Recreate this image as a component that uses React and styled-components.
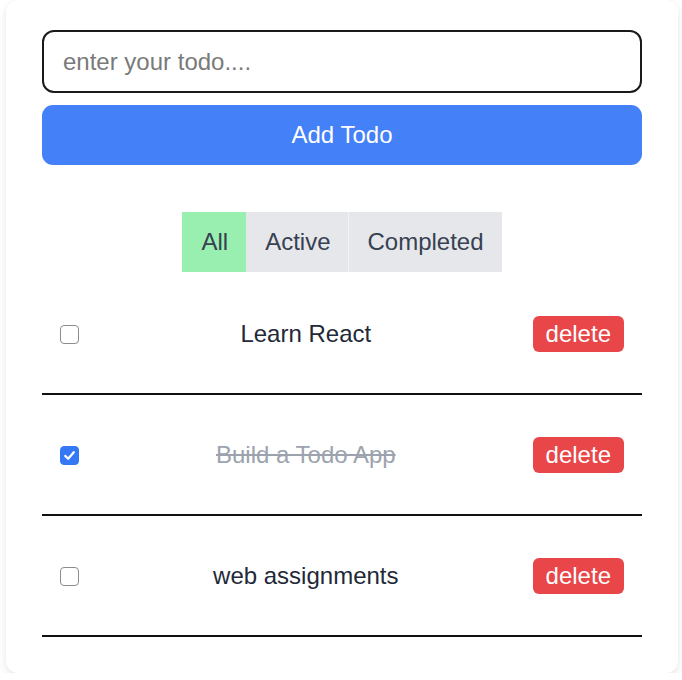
import React, { useState } from "react";
import styled, { createGlobalStyle, css } from "styled-components";

const Global = createGlobalStyle`
  html, body { margin: 0; padding: 0; background: #ffffff; }
  body { font-family: "Liberation Sans", Arial, sans-serif; }
  * { box-sizing: border-box; }
`;

const Card = styled.div`
  margin: 0 4px 0 6px;
  padding: 30px 36px 36px;
  background: #ffffff;
  border-radius: 12px;
  box-shadow: 0 4px 10px rgba(0, 0, 0, 0.09), 0 0 3px rgba(0, 0, 0, 0.04);
`;

const Form = styled.form`
  display: flex;
  flex-direction: column;
  gap: 12px;
`;

const TextInput = styled.input`
  width: 100%;
  height: 63px;
  padding: 0 19px;
  font-family: inherit;
  font-size: 24px;
  color: #111827;
  border: 2px solid #1a1a1a;
  border-radius: 12px;
  outline: none;
  background: #fff;
  &::placeholder { color: #7a7a7a; }
`;

const AddButton = styled.button`
  width: 100%;
  height: 60px;
  border: none;
  border-radius: 11px;
  background: #4480f8;
  color: #ffffff;
  font-family: inherit;
  font-size: 24px;
  cursor: pointer;
`;

const Filters = styled.div`
  display: flex;
  justify-content: center;
  margin-top: 47px;
`;

const FilterButton = styled.button`
  height: 60px;
  padding: 0 18px;
  border: none;
  border-left: 1px solid ${(p) => (p.$first ? "transparent" : "rgba(255,255,255,0.55)")};
  background: ${(p) => (p.$active ? "#98efb0" : "#e5e7eb")};
  color: #374151;
  font-family: inherit;
  font-size: 24px;
  cursor: pointer;
`;

const List = styled.ul`
  list-style: none;
  margin: 2px 0 0;
  padding: 0;
`;

const Row = styled.li`
  display: flex;
  align-items: center;
  justify-content: space-between;
  padding: 42px 18px 41px;
  border-bottom: 2px solid #111111;
`;

const CheckWrap = styled.label`
  position: relative;
  display: inline-flex;
  width: 19px;
  height: 19px;
`;

const CheckInput = styled.input`
  appearance: none;
  margin: 0;
  width: 19px;
  height: 19px;
  border-radius: 4px;
  border: 1.5px solid #8c8c8c;
  background: #fff;
  cursor: pointer;
  &:checked {
    background: #3478f6;
    border-color: #3478f6;
  }
`;

const CheckMark = styled.svg`
  position: absolute;
  left: 3px;
  top: 3px;
  width: 13px;
  height: 13px;
  pointer-events: none;
`;

const ItemText = styled.span`
  font-size: 24px;
  line-height: 36px;
  color: #1f2937;
  ${(p) =>
    p.$done &&
    css`
      color: #9ca3af;
      text-decoration: line-through;
    `}
`;

const DeleteButton = styled.button`
  height: 36px;
  padding: 0 13px;
  border: none;
  border-radius: 6px;
  background: #e84649;
  color: #ffffff;
  font-family: inherit;
  font-size: 24px;
  line-height: 36px;
  cursor: pointer;
`;

const initial = [
  { id: 1, text: "Learn React", done: false },
  { id: 2, text: "Build a Todo App", done: true },
  { id: 3, text: "web assignments", done: false },
];

export default function App() {
  const [todos, setTodos] = useState(initial);
  const [filter, setFilter] = useState("All");
  const [value, setValue] = useState("");

  const visible = todos.filter((t) =>
    filter === "All" ? true : filter === "Active" ? !t.done : t.done
  );

  return (
    <>
      <Global />
      <Card>
        <Form
          onSubmit={(e) => {
            e.preventDefault();
            if (!value.trim()) return;
            setTodos([...todos, { id: Date.now(), text: value, done: false }]);
            setValue("");
          }}
        >
          <TextInput
            placeholder="enter your todo...."
            value={value}
            onChange={(e) => setValue(e.target.value)}
          />
          <AddButton type="submit">Add Todo</AddButton>
        </Form>
        <Filters>
          {["All", "Active", "Completed"].map((f, i) => (
            <FilterButton
              key={f}
              $first={i < 2}
              $active={filter === f}
              onClick={() => setFilter(f)}
            >
              {f}
            </FilterButton>
          ))}
        </Filters>
        <List>
          {visible.map((t) => (
            <Row key={t.id}>
              <CheckWrap>
                <CheckInput
                  type="checkbox"
                  checked={t.done}
                  onChange={() =>
                    setTodos(todos.map((x) => (x.id === t.id ? { ...x, done: !x.done } : x)))
                  }
                />
                {t.done && (
                  <CheckMark viewBox="0 0 13 13">
                    <path
                      d="M2.2 6.9 L5.2 9.8 L10.8 3.2"
                      fill="none"
                      stroke="#ffffff"
                      strokeWidth="2.2"
                      strokeLinecap="round"
                      strokeLinejoin="round"
                    />
                  </CheckMark>
                )}
              </CheckWrap>
              <ItemText $done={t.done}>{t.text}</ItemText>
              <DeleteButton onClick={() => setTodos(todos.filter((x) => x.id !== t.id))}>
                delete
              </DeleteButton>
            </Row>
          ))}
        </List>
      </Card>
    </>
  );
}
